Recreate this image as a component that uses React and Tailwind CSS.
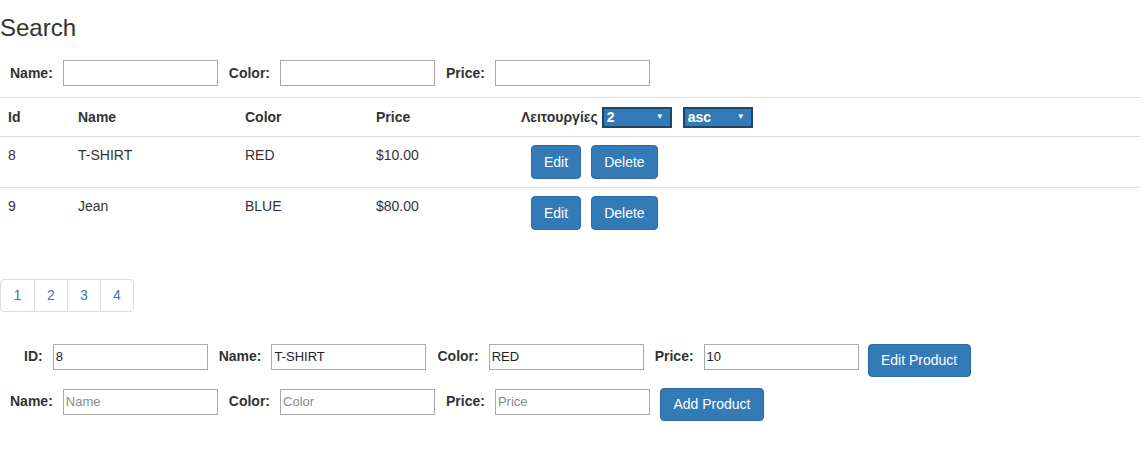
const font = { fontFamily: '"Liberation Sans", Arial, sans-serif' };

function Field({ label, value, placeholder }) {
  return (
    <>
      <label className="mr-[10px] text-[14px] font-bold text-[#333]">{label}</label>
      <input
        readOnly
        defaultValue={value}
        placeholder={placeholder}
        className="mr-[11px] h-[26px] w-[155px] border border-[#a9a9a9] px-[2px] text-[13px] text-[#222] placeholder:text-[#8a8a8a] outline-none"
      />
    </>
  );
}

function Btn({ children, className = "" }) {
  return (
    <button className={`rounded-[4px] border border-[#2e6da4] bg-[#337ab7] px-3 text-[14px] text-white ${className}`}>
      {children}
    </button>
  );
}

function Select({ value }) {
  return (
    <div className="flex h-[21px] w-[70px] items-center justify-between border-2 border-[#1d4568] bg-[#337ab7] pl-[3px] pr-[6px] text-[14px] font-bold leading-none text-white">
      <span>{value}</span>
      <span className="text-[8px]">▼</span>
    </div>
  );
}

const rows = [
  { id: 8, name: "T-SHIRT", color: "RED", price: "$10.00" },
  { id: 9, name: "Jean", color: "BLUE", price: "$80.00" },
];

export default function App() {
  return (
    <div style={font} className="h-[455px] w-[1147px] bg-white text-[#333]">
      <h3 className="pt-[15px] text-[24px] leading-[26px]">Search</h3>

      <div className="mt-[19px] flex items-center pl-[10px]">
        <Field label="Name:" />
        <Field label="Color:" />
        <Field label="Price:" />
      </div>

      <table className="mt-[11px] w-[1140px] border-collapse text-[14px]">
        <thead>
          <tr className="h-[39px] border-y border-[#ddd] text-left">
            <th className="w-[70px] px-2 font-bold">Id</th>
            <th className="w-[167px] px-2 font-bold">Name</th>
            <th className="w-[131px] px-2 font-bold">Color</th>
            <th className="w-[145px] px-2 font-bold">Price</th>
            <th className="px-2 font-bold">
              <div className="flex items-center">
                <span className="mr-[4px]">Λειτουργίες</span>
                <Select value="2" />
                <div className="ml-[11px]">
                  <Select value="asc" />
                </div>
              </div>
            </th>
          </tr>
        </thead>
        <tbody>
          {rows.map((r, i) => (
            <tr key={r.id} className={`h-[51px] align-top ${i === 0 ? "border-b border-[#ddd]" : ""}`}>
              <td className="px-2 pt-[8px] leading-[20px]">{r.id}</td>
              <td className="px-2 pt-[8px] leading-[20px]">{r.name}</td>
              <td className="px-2 pt-[8px] leading-[20px]">{r.color}</td>
              <td className="px-2 pt-[8px] leading-[20px]">{r.price}</td>
              <td className="px-2 pt-[8px]">
                <div className="ml-[10px] flex gap-[10px]">
                  <Btn className="h-[34px]">Edit</Btn>
                  <Btn className="h-[34px]">Delete</Btn>
                </div>
              </td>
            </tr>
          ))}
        </tbody>
      </table>

      <div className="mt-[40px] inline-flex overflow-hidden rounded-[4px] border border-[#ddd] text-[14px] text-[#337ab7]">
        {[1, 2, 3, 4].map((n) => (
          <div key={n} className="flex h-[31px] w-[33px] items-center justify-center border-l border-[#ddd] first:border-l-0">
            {n}
          </div>
        ))}
      </div>

      <div className="mt-[32px] flex items-start pl-[24px]">
        <div className="flex items-center">
          <Field label="ID:" value="8" />
          <Field label="Name:" value="T-SHIRT" />
          <Field label="Color:" value="RED" />
          <Field label="Price:" value="10" />
        </div>
        <Btn className="-ml-[2px] h-[33px] w-[103px] px-0">Edit Product</Btn>
      </div>

      <div className="mt-[11px] flex items-start pl-[10px]">
        <div className="mt-px flex items-center">
          <Field label="Name:" placeholder="Name" />
          <Field label="Color:" placeholder="Color" />
          <Field label="Price:" placeholder="Price" />
        </div>
        <Btn className="-ml-px h-[33px] w-[104px] px-0">Add Product</Btn>
      </div>
    </div>
  );
}
